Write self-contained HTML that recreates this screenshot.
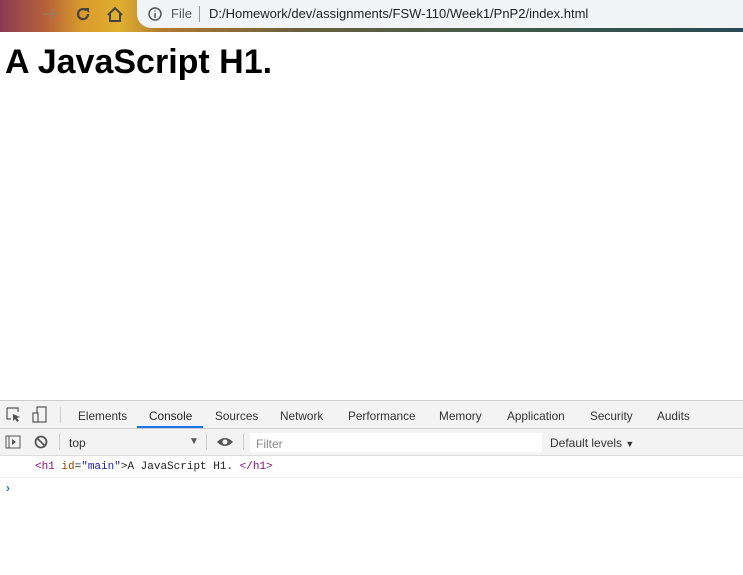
<!DOCTYPE html>
<html><head><style>
*{margin:0;padding:0;box-sizing:border-box}
body{width:743px;height:575px;overflow:hidden;background:#fff;font-family:"Liberation Sans",sans-serif;position:relative}
.top{position:absolute;left:0;top:0;width:743px;height:32px;background:linear-gradient(90deg,#8a3b52 0%,#b5603a 6%,#d89a2c 11%,#e0b030 16%,#b07a30 22%,#6a6040 40%,#3e5a48 70%,#2a4a55 100%)}
.url{position:absolute;left:137px;top:0;width:620px;height:28px;background:#f1f3f4;border-radius:0 0 0 14px}
.url span{position:absolute;top:6px;font-size:13px;color:#222}
h1{position:absolute;left:5px;top:43px;font-size:34px;font-weight:bold;color:#000;letter-spacing:0}
.dt{position:absolute;left:0;top:400px;width:743px;height:175px;background:#fff;border-top:1px solid #ccc}
.tabs{height:28px;background:#f3f3f3;border-bottom:1px solid #ccc;position:relative;font-size:12px;color:#333}
.tabs span{position:absolute;top:8px;font-size:11.8px}
.tb{height:27px;background:#f3f3f3;border-bottom:1px solid #ddd;position:relative;font-size:12px;color:#333}
.sep{position:absolute;width:1px;background:#ccc}
.msg{position:absolute;top:60px;left:35px;font-family:"Liberation Mono",monospace;font-size:11px;color:#222}
</style></head><body>
<div class="top">
<svg style="position:absolute;left:42px;top:7px" width="16" height="14"><path d="M1 7H14M9 2L14 7L9 12" fill="none" stroke="#9a7a5a" stroke-width="1.6"/></svg>
<svg style="position:absolute;left:75px;top:6px" width="16" height="16"><path d="M13 8A5 5 0 1 1 11.5 4.5" fill="none" stroke="#444" stroke-width="2.2"/><path d="M9 2H14V7Z" fill="#444"/></svg>
<svg style="position:absolute;left:106px;top:6px" width="18" height="17"><path d="M2 9 L9 2 L16 9 M4 8 V15 H14 V8" fill="none" stroke="#444" stroke-width="2"/></svg>
<div class="url">
<svg style="position:absolute;left:11px;top:7px" width="14" height="14"><circle cx="7" cy="7" r="6" fill="none" stroke="#555" stroke-width="1.5"/><path d="M7 6V11M7 3.5V4.5" stroke="#555" stroke-width="1.5"/></svg>
<span style="left:34px;color:#555">File</span>
<div class="sep" style="left:62px;top:6px;height:16px;background:#999"></div>
<span style="left:72px">D:/Homework/dev/assignments/FSW-110/Week1/PnP2/index.html</span>
</div></div>
<h1>A JavaScript H1.</h1>
<div class="dt">
<div class="tabs">
<svg style="position:absolute;left:6px;top:6px" width="16" height="16"><path d="M1 1H12V5M1 1V12H5" fill="none" stroke="#555" stroke-width="1.2"/><path d="M7 7L14 10L11 11L13 14L11 15L9 12L7 14Z" fill="#555"/></svg>
<svg style="position:absolute;left:32px;top:5px" width="16" height="18"><rect x="5" y="1" width="9" height="15" fill="none" stroke="#555" stroke-width="1.2"/><rect x="1" y="7" width="5" height="9" fill="#f3f3f3" stroke="#555" stroke-width="1.2"/></svg>
<div class="sep" style="left:60px;top:6px;height:16px"></div>
<span style="left:78px">Elements</span>
<span style="left:149px;color:#222">Console</span>
<div style="position:absolute;left:137px;top:25px;width:66px;height:2px;background:#1a73e8"></div>
<span style="left:215px">Sources</span>
<span style="left:280px">Network</span>
<span style="left:348px">Performance</span>
<span style="left:439px">Memory</span>
<span style="left:507px">Application</span>
<span style="left:590px">Security</span>
<span style="left:657px">Audits</span>
</div>
<div class="tb">
<svg style="position:absolute;left:5px;top:6px" width="16" height="14"><rect x="1" y="1" width="14" height="12" fill="none" stroke="#555"/><path d="M4 1V13" stroke="#555"/><path d="M7 4L11 7L7 10Z" fill="#555"/></svg>
<svg style="position:absolute;left:34px;top:6px" width="14" height="14"><circle cx="7" cy="7" r="5.5" fill="none" stroke="#555" stroke-width="1.8"/><path d="M3 3L11 11" stroke="#555" stroke-width="1.8"/></svg>
<div class="sep" style="left:59px;top:5px;height:16px"></div>
<span style="position:absolute;left:69px;top:7px">top</span>
<span style="position:absolute;left:189px;top:7px;font-size:10px;color:#555">▼</span>
<div class="sep" style="left:206px;top:5px;height:16px"></div>
<svg style="position:absolute;left:216px;top:7px" width="18" height="12"><path d="M1 6Q9 -2 17 6Q9 14 1 6Z" fill="#555"/><circle cx="9" cy="6" r="2.5" fill="#f3f3f3"/></svg>
<div class="sep" style="left:243px;top:5px;height:16px"></div>
<div style="position:absolute;left:250px;top:4px;width:292px;height:19px;background:#fff"></div>
<span style="position:absolute;left:256px;top:8px;color:#888">Filter</span>
<span style="position:absolute;left:550px;top:7px">Default levels <span style="font-size:9px">▼</span></span>
</div>
<div class="msg"><span style="color:#881280">&lt;h1</span> <span style="color:#994500">id</span>=<span style="color:#1a1aa6">"main"</span>&gt;A JavaScript H1. <span style="color:#881280">&lt;/h1&gt;</span></div>
<div style="position:absolute;top:76px;left:0;width:743px;height:1px;background:#eee"></div>
<span style="position:absolute;left:6px;top:80px;color:#2a6bd8;font-size:12px;font-weight:bold">›</span>
</div>
</body></html>
